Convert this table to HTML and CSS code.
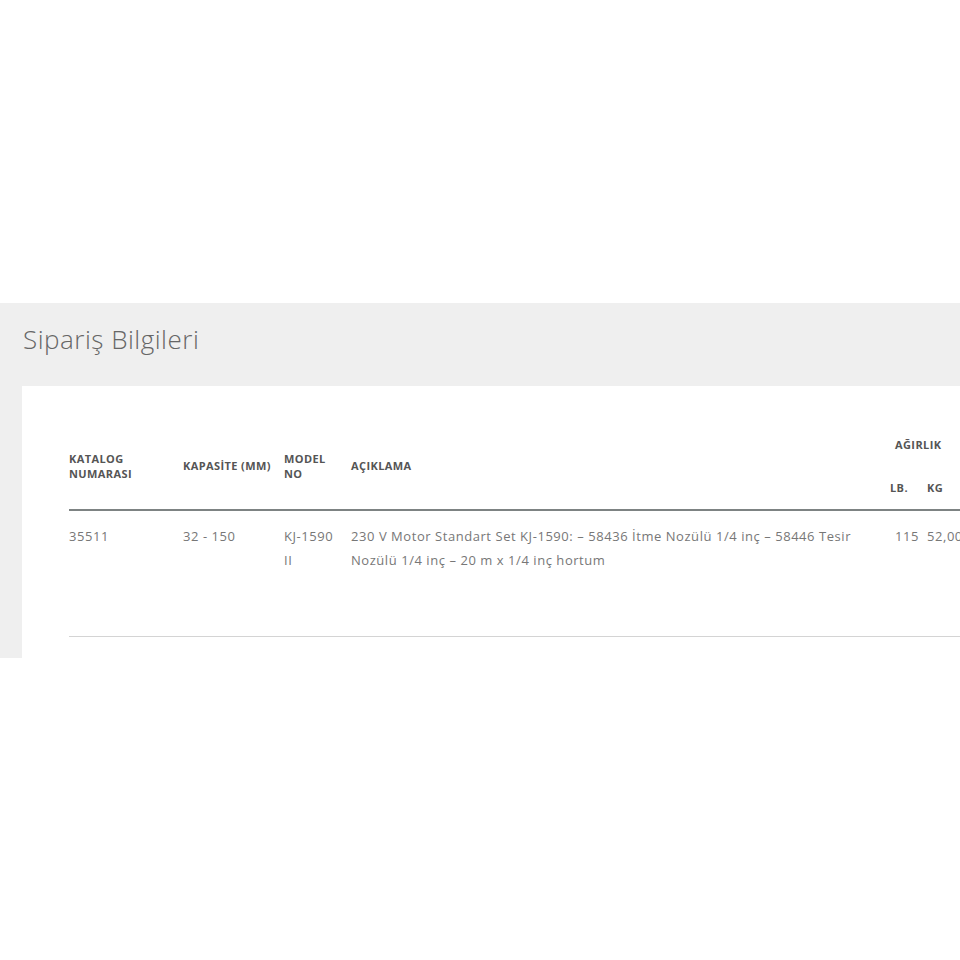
FILE: index.html
```html
<!DOCTYPE html>
<html lang="tr">
<head>
<meta charset="utf-8">
<title>Sipariş Bilgileri</title>
<link rel="stylesheet" href="styles.css">
</head>
<body>
<div class="top-space"></div>
<section class="order">
  <h2 class="order-title">Sipariş Bilgileri</h2>
  <div class="card">
    <table class="spec">
      <colgroup>
        <col class="c-cat"><col class="c-cap"><col class="c-model"><col class="c-desc"><col class="c-lb"><col class="c-kg">
      </colgroup>
      <thead>
        <tr class="h1">
          <th rowspan="2">KATALOG<br>NUMARASI</th>
          <th rowspan="2">KAPASİTE (MM)</th>
          <th rowspan="2">MODEL<br>NO</th>
          <th rowspan="2">AÇIKLAMA</th>
          <th colspan="2" class="weight">AĞIRLIK</th>
        </tr>
        <tr class="h2">
          <th>LB.</th>
          <th>KG</th>
        </tr>
      </thead>
      <tbody>
        <tr>
          <td>35511</td>
          <td>32 - 150</td>
          <td>KJ-1590 II</td>
          <td class="desc">230 V Motor Standart Set KJ-1590: – 58436 İtme Nozülü 1/4 inç – 58446 Tesir Nozülü 1/4 inç – 20 m x 1/4 inç hortum</td>
          <td class="lb">115</td>
          <td>52,00</td>
        </tr>
      </tbody>
    </table>
  </div>
</section>
</body>
</html>
```

FILE: styles.css
```css
html, body {
  margin: 0;
  padding: 0;
  background: #ffffff;
  overflow: hidden;
}

body {
  font-family: "Open Sans", "Noto Sans", sans-serif;
  width: 960px;
  height: 960px;
}

.top-space {
  height: 303px;
}

.order {
  background: #efefef;
  overflow: hidden;
}

.order-title {
  margin: 0;
  padding: 18px 0 0 23px;
  height: 83px;
  box-sizing: border-box;
  font-size: 26px;
  font-weight: 300;
  color: #666666;
  letter-spacing: 0.5px;
  line-height: 36px;
}

.card {
  margin-left: 22px;
  background: #ffffff;
  padding: 36px 0 21px 47px;
  width: 1000px;
}

.spec {
  border-collapse: collapse;
  table-layout: fixed;
  width: 960px;
}

.c-cat { width: 114px; }
.c-cap { width: 101px; }
.c-model { width: 67px; }
.c-desc { width: 539px; }
.c-lb { width: 37px; }
.c-kg { width: 102px; }

.spec th {
  font-size: 11px;
  font-weight: 700;
  color: #555555;
  text-align: left;
  line-height: 15px;
  padding: 0 4px 0 0;
  vertical-align: middle;
  letter-spacing: 0.4px;
}

.spec thead .h1 th {
  height: 44px;
}

.spec thead .h2 th {
  height: 43px;
}

.spec th.weight {
  padding-left: 5px;
}

.spec thead {
  border-bottom: 2px solid #7d8383;
}

.spec td {
  font-size: 13px;
  color: #777777;
  line-height: 24px;
  vertical-align: top;
  padding: 13px 8px 64px 0;
  letter-spacing: 0.55px;
}

.spec td.desc {
  padding-right: 12px;
}

.spec td.lb {
  padding-left: 5px;
}

.spec tbody tr {
  border-bottom: 1px solid #d4d4d4;
}
```
